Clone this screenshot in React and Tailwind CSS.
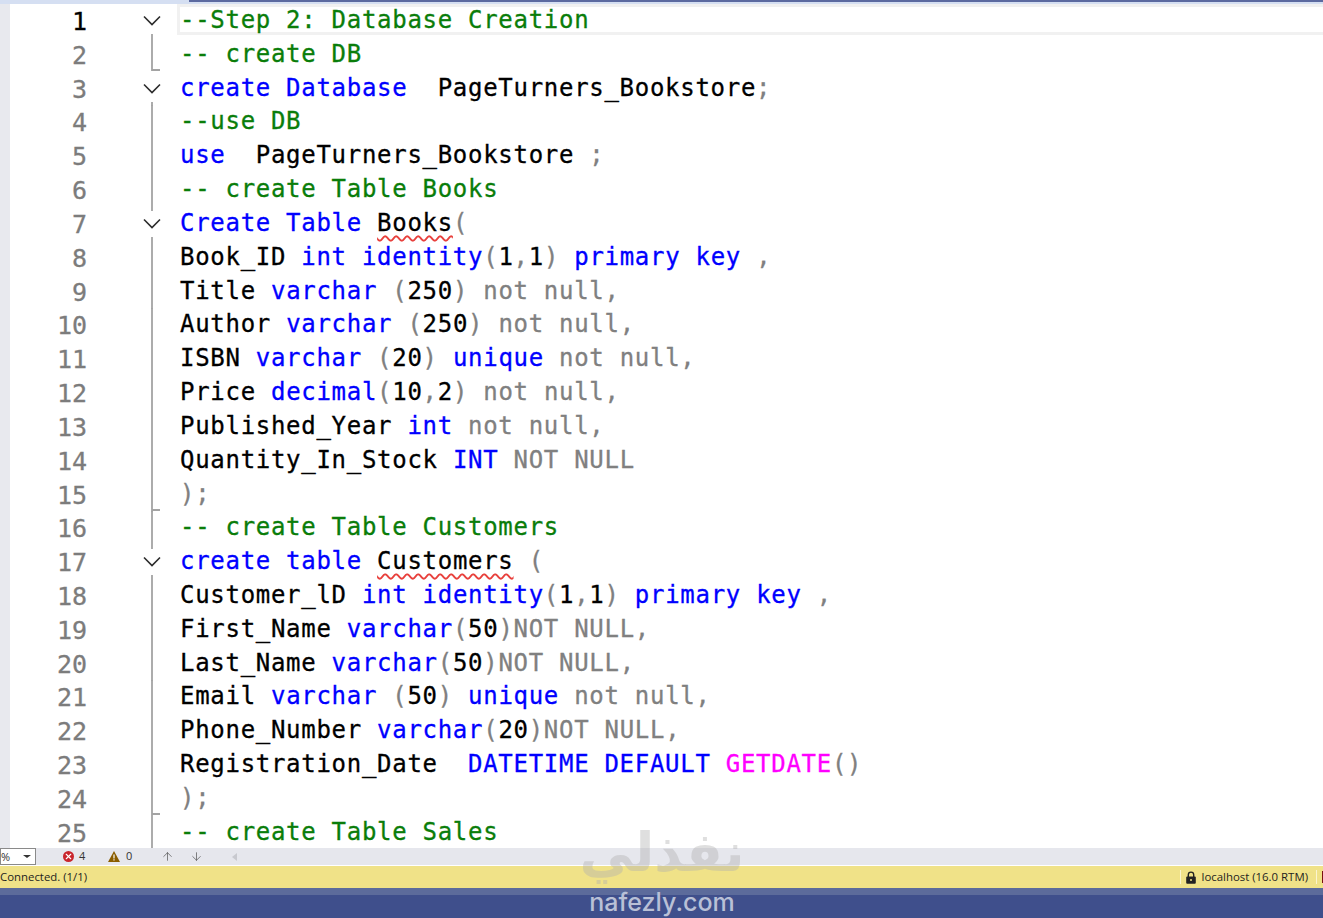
import React from 'react';
import { ArrowUp, ArrowDown, X } from 'lucide-react';

const K = 'text-[#0000ff]';
const C = 'text-[#0a7d0a]';
const G = 'text-[#808080]';
const P = 'text-[#ff00ff]';
const T = 'text-black';
const S = 'text-black underline decoration-wavy decoration-[#e8403c] decoration-[1.5px] underline-offset-[4px]';

// each line: fold marker + coloured tokens
const lines = [
  { fold: 'first', tokens: [[C, '--Step 2: Database Creation']] },
  { fold: 'end', tokens: [[C, '-- create DB']] },
  { fold: 'first', tokens: [[K, 'create Database'], [T, '  PageTurners_Bookstore'], [G, ';']] },
  { fold: 'line', tokens: [[C, '--use DB']] },
  { fold: 'line', tokens: [[K, 'use'], [T, '  PageTurners_Bookstore '], [G, ';']] },
  { fold: 'line', tokens: [[C, '-- create Table Books']] },
  { fold: 'open', tokens: [[K, 'Create Table'], [T, ' '], [S, 'Books'], [G, '(']] },
  { fold: 'line', tokens: [[T, 'Book_ID '], [K, 'int identity'], [G, '('], [T, '1'], [G, ','], [T, '1'], [G, ') '], [K, 'primary key'], [G, ' ,']] },
  { fold: 'line', tokens: [[T, 'Title '], [K, 'varchar'], [G, ' ('], [T, '250'], [G, ') not null,']] },
  { fold: 'line', tokens: [[T, 'Author '], [K, 'varchar'], [G, ' ('], [T, '250'], [G, ') not null,']] },
  { fold: 'line', tokens: [[T, 'ISBN '], [K, 'varchar'], [G, ' ('], [T, '20'], [G, ') '], [K, 'unique'], [G, ' not null,']] },
  { fold: 'line', tokens: [[T, 'Price '], [K, 'decimal'], [G, '('], [T, '10'], [G, ','], [T, '2'], [G, ') not null,']] },
  { fold: 'line', tokens: [[T, 'Published_Year '], [K, 'int'], [G, ' not null,']] },
  { fold: 'line', tokens: [[T, 'Quantity_In_Stock '], [K, 'INT'], [G, ' NOT NULL']] },
  { fold: 'tick', tokens: [[G, ');']] },
  { fold: 'line', tokens: [[C, '-- create Table Customers']] },
  { fold: 'open', tokens: [[K, 'create table'], [T, ' '], [S, 'Customers'], [G, ' (']] },
  { fold: 'line', tokens: [[T, 'Customer_lD '], [K, 'int identity'], [G, '('], [T, '1'], [G, ','], [T, '1'], [G, ') '], [K, 'primary key'], [G, ' ,']] },
  { fold: 'line', tokens: [[T, 'First_Name '], [K, 'varchar'], [G, '('], [T, '50'], [G, ')NOT NULL,']] },
  { fold: 'line', tokens: [[T, 'Last_Name '], [K, 'varchar'], [G, '('], [T, '50'], [G, ')NOT NULL,']] },
  { fold: 'line', tokens: [[T, 'Email '], [K, 'varchar'], [G, ' ('], [T, '50'], [G, ') '], [K, 'unique'], [G, ' not null,']] },
  { fold: 'line', tokens: [[T, 'Phone_Number '], [K, 'varchar'], [G, '('], [T, '20'], [G, ')NOT NULL,']] },
  { fold: 'line', tokens: [[T, 'Registration_Date  '], [K, 'DATETIME DEFAULT'], [T, ' '], [P, 'GETDATE'], [G, '()']] },
  { fold: 'tick', tokens: [[G, ');']] },
  { fold: 'line', tokens: [[C, '-- create Table Sales']] },
];

const foldPaths = {
  first: 'M9 30 V34',
  open: 'M9 0 V4 M9 30 V34',
  end: 'M9 0 V32 H17',
  tick: 'M9 0 V34 M9 32 H17',
  line: 'M9 0 V34',
};

const FoldMark = ({ type }) => (
  <svg width="18" height="34" viewBox="0 0 18 34" className="block">
    <path d={foldPaths[type]} fill="none" stroke="#a3a3a3" strokeWidth="1.8" />
    {(type === 'first' || type === 'open') && (
      <path d="M1 12.5 L9 20.5 L17 12.5" fill="none" stroke="#2b2b2b" strokeWidth="1.6" />
    )}
  </svg>
);

const CodeRow = ({ n, line }) => (
  <div className="flex h-[33.83px] items-center">
    <div className={`mt-[2px] w-[77px] text-right text-[25px] ${n === 1 ? 'text-black' : 'text-[#7c7c7c]'}`}>{n}</div>
    <div className="ml-[56px] w-[18px] shrink-0">
      <FoldMark type={line.fold} />
    </div>
    <div className="-mt-[2px] ml-[19px] whitespace-pre tracking-[0.71px]">
      {line.tokens.map(([cls, text], i) => (
        <span key={i} className={cls}>{text}</span>
      ))}
    </div>
  </div>
);

const App = () => {
  return (
    <div className="relative flex h-[918px] w-full flex-col overflow-hidden bg-white font-['Open_Sans',sans-serif]">
      {/* top edge of the window */}
      <div className="flex h-[4px] shrink-0 bg-[#d5dff2]">
        <div className="ml-[189px] h-[2px] flex-1 bg-[#5c6aa0]" />
      </div>

      {/* editor */}
      <div className="relative flex min-h-0 flex-1 overflow-hidden">
        <div className="w-[10px] shrink-0 bg-[#e8e9ee]" />
        <div className="relative flex-1 font-['DejaVu_Sans_Mono',monospace] text-[24px] leading-[34px] [-webkit-text-stroke:0.3px]">
          <div className="absolute left-[167px] right-0 top-0 h-[31px] border-y-[3.5px] border-l-[3px] border-[#f1f1f1]" />
          <div className="relative">
            {lines.map((line, i) => (
              <CodeRow key={i} n={i + 1} line={line} />
            ))}
          </div>
        </div>
      </div>

      {/* editor status strip */}
      <div className="flex h-[17px] shrink-0 items-center bg-[#e6e7ed] text-[11px] text-[#333333]">
        <div className="flex h-[17px] w-[36px] items-center justify-between border border-[#8a8a8a] bg-white pr-[4px] leading-none">
          <span>%</span>
          <span className="h-0 w-0 border-x-[4px] border-t-[3px] border-x-transparent border-t-[#333333]" />
        </div>
        <div className="ml-[27px] flex h-[11px] w-[11px] items-center justify-center rounded-full bg-[#c9252d]">
          <X size={9} strokeWidth={3} color="#ffffff" />
        </div>
        <span className="ml-[5px] w-[20px]">4</span>
        <svg width="12" height="11" viewBox="0 0 12 11" className="ml-[9px]">
          <path d="M6 0 L12 11 H0 Z" fill="#8a5d00" />
          <path d="M5.4 3.5 H6.6 V7.5 H5.4 Z M5.4 8.3 H6.6 V9.5 H5.4 Z" fill="#ffffff" />
        </svg>
        <span className="ml-[6px]">0</span>
        <ArrowUp size={13} strokeWidth={1.2} color="#444444" className="ml-[29px]" />
        <ArrowDown size={13} strokeWidth={1.2} color="#444444" className="ml-[16px]" />
        <span className="ml-[29px] h-0 w-0 border-y-[4px] border-r-[5px] border-y-transparent border-r-[#c8c9cf]" />
      </div>

      {/* connection bar */}
      <div className="mt-px flex h-[22px] shrink-0 items-center justify-between bg-[#f0e288] text-[11.4px] text-[#1e1e1e]">
        <span>Connected. (1/1)</span>
        <div className="flex h-full items-center">
          <span className="h-[14px] w-px bg-[#fbf5cf]" />
          <svg width="12" height="13" viewBox="0 0 12 13" className="ml-[4px]">
            <path d="M3.3 6 V3.8 a2.7 2.7 0 0 1 5.4 0 V6" fill="none" stroke="#222222" strokeWidth="1.4" />
            <rect x="1.2" y="5.5" width="9.6" height="7.2" rx="1" fill="#222222" />
            <circle cx="6" cy="9" r="1" fill="#f0e288" />
          </svg>
          <span className="ml-[5px]">localhost (16.0 RTM)</span>
          <span className="ml-[8px] h-[14px] w-px bg-[#fbf5cf]" />
          <span className="ml-[5px] h-[12px] w-[1px] bg-[#7a1010]" />
        </div>
      </div>

      {/* window footer */}
      <div className="h-[7px] shrink-0 bg-[#5c6b9b]" />
      <div className="h-[23px] shrink-0 bg-[#3f4f8c]" />

      {/* watermark */}
      <div className="pointer-events-none absolute left-[560px] top-[816px] flex w-[204px] flex-col items-center">
        <span dir="rtl" className="font-['DejaVu_Sans',sans-serif] text-[54px] font-bold leading-[74px] text-[#b0b0b0] opacity-40">نفذلي</span>
        <span className="-mt-[2px] font-['Inter',sans-serif] text-[25px] font-medium leading-[28px] text-[#b9c0d6]">nafezly.com</span>
      </div>
    </div>
  );
};

export default App;
